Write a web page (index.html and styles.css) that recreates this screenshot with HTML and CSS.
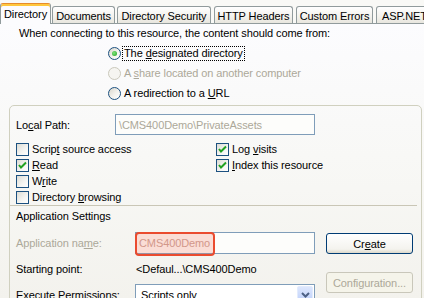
FILE: index.html
```html
<!DOCTYPE html>
<html>
<head>
<meta charset="utf-8">
<link rel="stylesheet" href="styles.css">
</head>
<body>
<div class="dialog">
  <div class="tabs">
    <div class="tab sel w-dir">Directory</div>
    <div class="tab w-doc">Documents</div>
    <div class="tab w-sec">Directory Security</div>
    <div class="tab w-http">HTTP Headers</div>
    <div class="tab w-err">Custom Errors</div>
    <div class="tab w-asp">ASP.NET</div>
  </div>
  <div class="panel">
    <div class="intro">When connecting to this resource, the content should come from:</div>
    <div class="radios">
      <div class="radio-row"><span class="radio on"></span><span class="focus">The <u>d</u>esignated directory</span></div>
      <div class="radio-row dis"><span class="radio off"></span><span class="rtext">A <u>s</u>hare located on another computer</span></div>
      <div class="radio-row"><span class="radio"></span><span class="rtext">A redirection to a <u>U</u>RL</span></div>
    </div>
    <div class="group">
      <div class="path-row">
        <span class="path-lbl">Lo<u>c</u>al Path:</span>
        <div class="textbox">\CMS400Demo\PrivateAssets</div>
      </div>
      <div class="checks">
        <div class="check"><span class="cb"></span><span>Scrip<u>t</u> source access</span></div>
        <div class="check"><span class="cb"><svg width="11" height="11" viewBox="0 0 11 11"><polyline points="2,5 4,7.5 9,2.5" fill="none" stroke="#21a121" stroke-width="2"/></svg></span><span><u>R</u>ead</span></div>
        <div class="check"><span class="cb"></span><span>W<u>r</u>ite</span></div>
        <div class="check"><span class="cb"></span><span>Directory <u>b</u>rowsing</span></div>
        <div class="check"><span class="cb"><svg width="11" height="11" viewBox="0 0 11 11"><polyline points="2,5 4,7.5 9,2.5" fill="none" stroke="#21a121" stroke-width="2"/></svg></span><span>Log <u>v</u>isits</span></div>
        <div class="check"><span class="cb"><svg width="11" height="11" viewBox="0 0 11 11"><polyline points="2,5 4,7.5 9,2.5" fill="none" stroke="#21a121" stroke-width="2"/></svg></span><span><u>I</u>ndex this resource</span></div>
      </div>
      <div class="sep"></div>
      <div class="appset-title">Application Settings</div>
      <div class="app">
        <div class="app-fields">
          <div class="app-row">
            <span class="lbl dis-text">Application na<u>m</u>e:</span>
            <div class="field textbox name-box">CMS400Demo<span class="hl"></span></div>
          </div>
          <div class="app-row">
            <span class="lbl">Starting point:</span>
            <div class="field plain">&lt;Defaul...\CMS400Demo</div>
          </div>
          <div class="app-row">
            <span class="lbl">Execute Permissions:</span>
            <div class="field select"><span class="sel-text">Scripts only</span><span class="drop"><svg width="9" height="6" viewBox="0 0 9 6"><polyline points="1,1 4.5,4.5 8,1" fill="none" stroke="#4d6185" stroke-width="2"/></svg></span></div>
          </div>
        </div>
        <div class="app-buttons">
          <div class="btn create"><span>Cr<u>e</u>ate</span></div>
          <div class="btn config">Configuration...</div>
        </div>
      </div>
    </div>
  </div>
</div>
</body>
</html>
```
FILE: styles.css
```css
* { box-sizing: border-box; }
html, body { margin: 0; padding: 0; }
body {
  width: 424px;
  height: 298px;
  overflow: hidden;
  font-family: "Liberation Sans", Arial, sans-serif;
  font-size: 11px;
  letter-spacing: -0.1px;
  color: #000;
  background: #f9f9f6;
}
u { text-decoration: underline; text-underline-offset: 1px; }
.dialog { display: flex; flex-direction: column; height: 298px; }
.tabs {
  display: flex;
  align-items: flex-end;
  height: 24px;
  flex-shrink: 0;
  border-bottom: 1px solid #919b9c;
}
.tab {
  height: 17px;
  margin-left: 2px;
  border: 1px solid #919b9c;
  border-bottom: none;
  border-radius: 3px 3px 0 0;
  background: linear-gradient(#ffffff, #f3f2ed 60%, #e8e6de);
  display: flex;
  align-items: center;
  justify-content: center;
  padding-top: 1px;
  white-space: nowrap;
  flex-shrink: 0;
}
.tab.sel {
  height: 21px;
  margin-left: 0;
  margin-bottom: -1px;
  background: #fcfcfe;
  border-top: 1px solid #e68b2c;
  box-shadow: inset 0 2px 0 #ffc73c;
  align-items: flex-start;
  padding-top: 4px;
}
.w-dir { width: 51px; margin-left: 0; }
.w-doc { width: 63px; margin-left: 1px; }
.w-sec { width: 94px; }
.w-http { width: 79px; margin-left: 3px; }
.w-err { width: 77px; margin-left: 3px; }
.w-asp { width: 56px; margin-left: 3px; justify-content: flex-start; padding-left: 5px; }
.panel {
  flex: 1;
  display: flex;
  flex-direction: column;
  background: linear-gradient(#fcfcfe, #f7f7f4 60%, #f3f2ed);
  overflow: hidden;
}
.intro { margin: 2px 0 0 19px; line-height: 14px; height: 14px; white-space: nowrap; }
.radios { margin: 3px 0 0 108px; }
.radio-row { display: flex; align-items: center; height: 20px; white-space: nowrap; }
.radio {
  width: 13px;
  height: 13px;
  border-radius: 50%;
  border: 1px solid #1c5180;
  background: linear-gradient(135deg, #d8d5cb, #f4f3ee 55%, #ffffff);
  margin-right: 3px;
  display: flex;
  align-items: center;
  justify-content: center;
  flex-shrink: 0;
}
.radio.on::after {
  content: "";
  width: 5px;
  height: 5px;
  border-radius: 50%;
  background: radial-gradient(circle at 40% 40%, #7fe47b, #21a121);
}
.radio.off { border-color: #cac8bb; background: #f6f5f1; }
.dis { color: #aca899; }
.dis-text { color: #aca899; }
.focus { outline: 1px dotted #000; outline-offset: 0; padding: 0 1px; margin-left: -1px; line-height: 13px; }
.group {
  margin: 2px 0 0 9px;
  width: 413px;
  height: 300px;
  flex-shrink: 0;
  border: 1px solid #d0d0bf;
  border-radius: 5px 5px 0 0;
  padding: 8px 0 0 6px;
}
.path-row { display: flex; align-items: center; height: 21px; }
.path-lbl { width: 99px; }
.textbox {
  width: 200px;
  height: 21px;
  border: 1px solid #7f9db9;
  background: #fdfdfb;
  color: #aca899;
  padding: 0 3px;
  display: flex;
  align-items: center;
  white-space: nowrap;
}
.checks {
  display: grid;
  grid-template-columns: 200px 200px;
  grid-template-rows: repeat(4, 16px);
  grid-auto-flow: column;
  margin-top: 6px;
}
.check { display: flex; align-items: center; white-space: nowrap; }
.cb {
  width: 13px;
  height: 13px;
  border: 1px solid #1c5180;
  background: linear-gradient(135deg, #dcdcd5, #f5f5f2 60%, #ffffff);
  margin-right: 3px;
  display: flex;
  align-items: center;
  justify-content: center;
  flex-shrink: 0;
}
.sep { border-top: 1px solid #c9c6b6; margin: 0 4px 0 -6px; }
.appset-title { margin-top: 3px; line-height: 14px; }
.app { display: flex; margin-top: 9px; }
.app-fields { display: flex; flex-direction: column; gap: 4px; width: 299px; }
.app-row { display: flex; align-items: center; height: 22px; }
.lbl { width: 119px; white-space: nowrap; }
.field { width: 180px; height: 22px; }
.name-box { position: relative; color: #c9a39a; background: #fdfdfb; }
.hl {
  position: absolute;
  left: -1px;
  top: -1px;
  width: 80px;
  height: 24px;
  border: 2px solid #ea4b2f;
  border-radius: 4px;
  background: rgba(240, 110, 80, 0.22);
}
.plain { display: flex; align-items: center; padding-left: 1px; white-space: nowrap; }
.select {
  display: flex;
  align-items: stretch;
  height: 22px;
  border: 1px solid #7f9db9;
  background: #fff;
  padding: 1px;
}
.sel-text { flex: 1; display: flex; align-items: center; padding-left: 4px; }
.drop {
  width: 16px;
  border: 1px solid #e2ebfd;
  border-radius: 2px;
  background: linear-gradient(#dde7fd, #bccefa);
  display: flex;
  align-items: center;
  justify-content: center;
}
.app-buttons { margin-left: 11px; display: flex; flex-direction: column; }
.btn {
  width: 87px;
  height: 21px;
  border: 1px solid #003c74;
  border-radius: 3px;
  background: linear-gradient(#ffffff, #f4f3ee 80%, #dcd8ca);
  display: flex;
  align-items: center;
  justify-content: center;
  white-space: nowrap;
}
.create { margin-top: 1px; }
.config { margin-top: 18px; border-color: #c9c7ba; color: #aca899; background: #f5f4ea; }
```
